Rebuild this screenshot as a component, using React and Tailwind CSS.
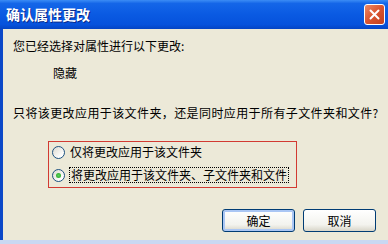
import React, { useState } from "react";

const font = { fontFamily: '"Noto Sans CJK SC", "Liberation Sans", sans-serif' };

const Radio = ({ checked }) => (
  <span className="relative flex h-[13px] w-[13px] shrink-0 items-center justify-center rounded-full border border-[#1c5180] bg-[linear-gradient(135deg,#dcd9cf_0%,#ffffff_80%)]">
    {checked && (
      <span className="h-[5px] w-[5px] rounded-full bg-[radial-gradient(circle,#5ad05a_0%,#21a121_100%)]" />
    )}
  </span>
);

const XpButton = ({ children, primary }) => (
  <button
    className={
      "flex h-[23px] w-[73px] items-center justify-center rounded-[3px] border border-[#003c74] bg-[linear-gradient(to_bottom,#ffffff_0%,#f3f3ee_70%,#d8d5c8_100%)] text-[12px] leading-none text-black " +
      (primary ? "shadow-[inset_0_0_0_2px_#aac6f4]" : "")
    }
  >
    {children}
  </button>
);

export default function App() {
  const [choice, setChoice] = useState(1);

  return (
    <div className="flex h-[244px] w-[388px] flex-col overflow-hidden" style={font}>
      <div className="flex h-[29px] shrink-0 items-center justify-between bg-[linear-gradient(to_bottom,#3b8cf5_0%,#1466e8_12%,#0a5ae2_50%,#0652dc_85%,#0444c4_100%)] pl-[6px] pr-[3px]">
        <span className="text-[14px] font-bold text-white [text-shadow:1px_1px_#0a2a8a]">
          确认属性更改
        </span>
        <button className="flex h-[21px] w-[21px] items-center justify-center rounded-[3px] border border-white bg-[linear-gradient(135deg,#ee8a66_0%,#d9542f_50%,#c2401f_100%)]">
          <svg width="11" height="11" viewBox="0 0 11 11">
            <path d="M1.5 1.5 L9.5 9.5 M9.5 1.5 L1.5 9.5" stroke="white" strokeWidth="2" strokeLinecap="round" />
          </svg>
        </button>
      </div>

      <div className="flex flex-1 flex-col border-l-[3px] border-[#0b48c8] bg-[#ece9d8] pl-[10px] text-[12px] leading-[16px] text-black">
        <div className="mt-[9px]">您已经选择对属性进行以下更改:</div>
        <div className="ml-[40px] mt-[11px]">隐藏</div>
        <div className="mt-[24px] tracking-[0.4px]">
          只将该更改应用于该文件夹，还是同时应用于所有子文件夹和文件?
        </div>

        <div className="ml-[35px] mt-[20px] flex h-[47px] w-[249px] flex-col gap-[7px] border border-[#d23a32] pl-[3px] pt-[2px]">
          <label className="flex h-[16px] items-center gap-[5px]" onClick={() => setChoice(0)}>
            <Radio checked={choice === 0} />
            <span>仅将更改应用于该文件夹</span>
          </label>
          <label className="flex h-[16px] items-center gap-[4px]" onClick={() => setChoice(1)}>
            <Radio checked={choice === 1} />
            <span className="border border-dotted border-black px-px leading-[14px]">
              将更改应用于该文件夹、子文件夹和文件
            </span>
          </label>
        </div>

        <div className="mt-[21px] flex justify-end gap-[8px] pr-[12px]">
          <XpButton primary>确定</XpButton>
          <XpButton>取消</XpButton>
        </div>
      </div>

      <div className="h-[4px] shrink-0 bg-[#c9d8f2]" />
    </div>
  );
}
